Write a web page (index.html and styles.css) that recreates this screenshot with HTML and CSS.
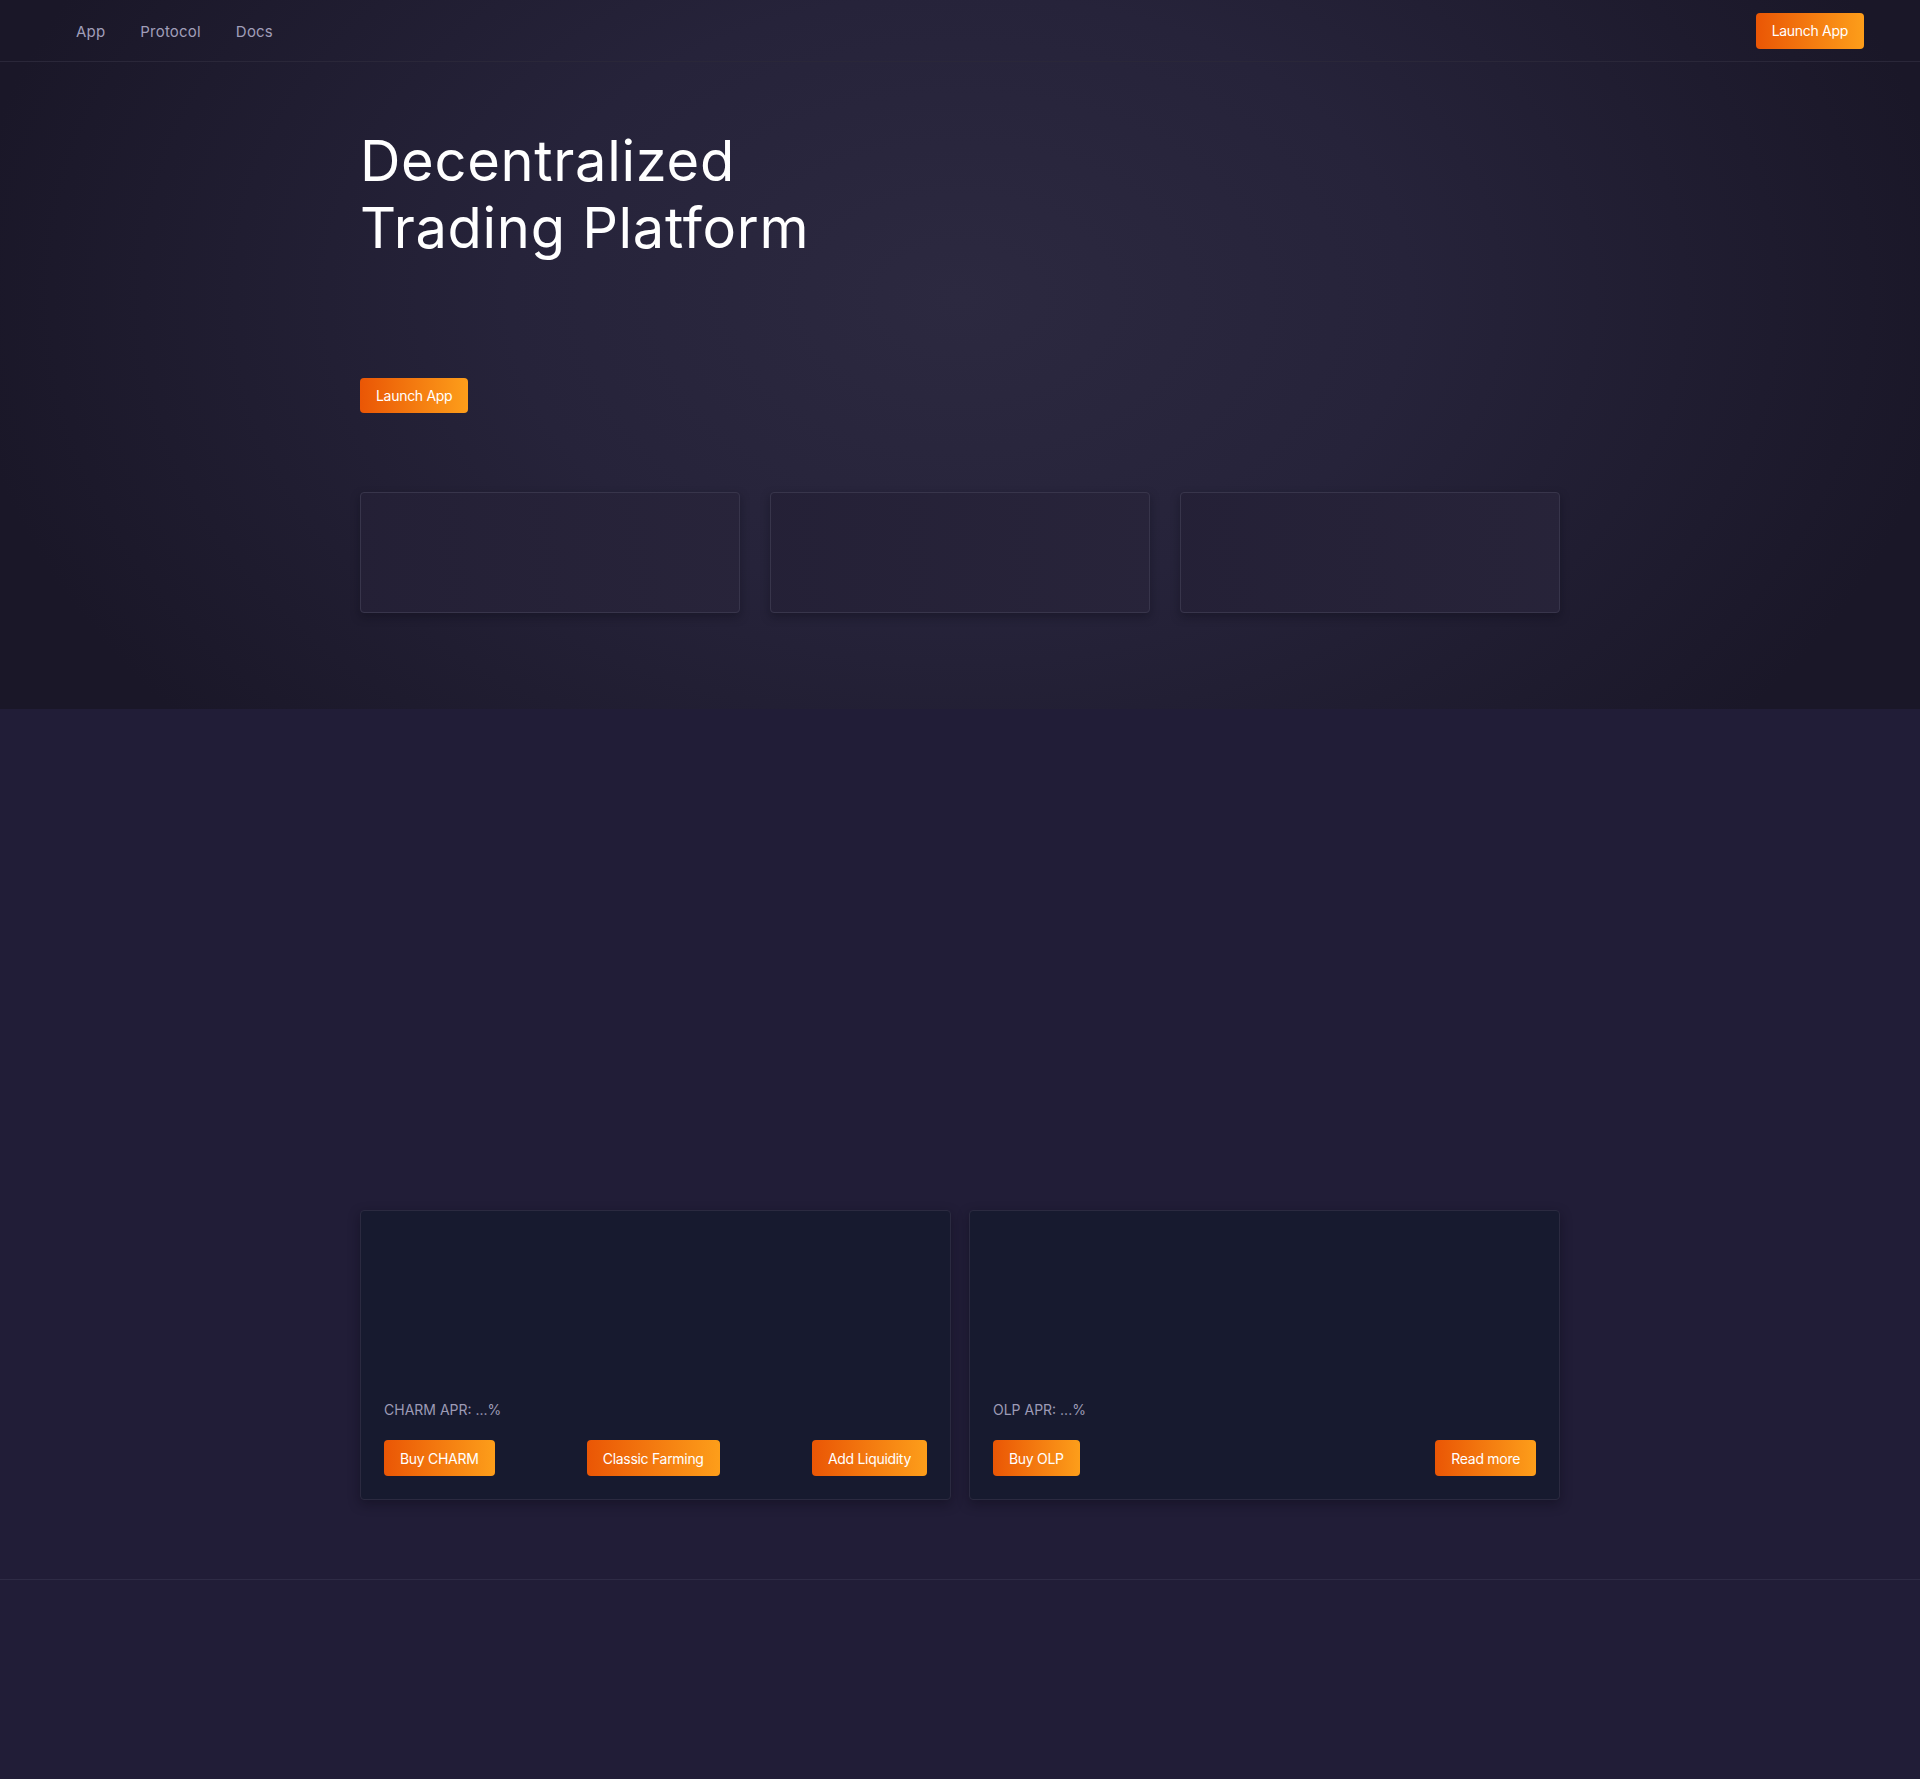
FILE: index.html
```html
<!DOCTYPE html>
<html lang="en">
<head>
<meta charset="utf-8">
<title>Decentralized Trading Platform</title>
<link rel="stylesheet" href="styles.css">
</head>
<body>
<div class="top">
  <header class="nav">
    <nav class="nav-links">
      <a href="#" class="nav-link">App</a>
      <a href="#" class="nav-link">Protocol</a>
      <a href="#" class="nav-link">Docs</a>
    </nav>
    <a href="#" class="btn">Launch App</a>
  </header>
  <section class="hero">
    <div class="container">
      <h1 class="hero-title">Decentralized<br>Trading Platform</h1>
      <div class="hero-actions">
        <a href="#" class="btn">Launch App</a>
      </div>
      <div class="stats">
        <div class="stat-card"></div>
        <div class="stat-card"></div>
        <div class="stat-card"></div>
      </div>
    </div>
  </section>
</div>
<section class="tokens">
  <div class="container token-grid">
    <div class="token-card">
      <div class="apr">CHARM APR: ...%</div>
      <div class="token-actions">
        <a href="#" class="btn">Buy CHARM</a>
        <a href="#" class="btn">Classic Farming</a>
        <a href="#" class="btn">Add Liquidity</a>
      </div>
    </div>
    <div class="token-card">
      <div class="apr">OLP APR: ...%</div>
      <div class="token-actions">
        <a href="#" class="btn">Buy OLP</a>
        <a href="#" class="btn">Read more</a>
      </div>
    </div>
  </div>
</section>
<footer class="footer"></footer>
</body>
</html>
```
FILE: styles.css
```css
* { box-sizing: border-box; }
html, body { margin: 0; padding: 0; }
body {
  background: #211d37;
  font-family: Inter, "Noto Sans", sans-serif;
  color: #fff;
}
a { text-decoration: none; }

.top {
  background: radial-gradient(ellipse 52% 95% at 50% 42%, #2c2940 0%, #26233a 45%, #1a1728 100%);
}

.nav {
  height: 62px;
  display: flex;
  align-items: center;
  justify-content: space-between;
  padding: 0 56px 0 76px;
  border-bottom: 1px solid #2a2739;
}
.nav-links { display: flex; gap: 35px; padding-top: 2px; }
.nav-link {
  color: #a09eb9;
  font-size: 15px;
  letter-spacing: 0.2px;
}

.btn {
  display: inline-flex;
  align-items: center;
  justify-content: center;
  height: 36px;
  padding: 0 16px;
  border-radius: 4px;
  background: linear-gradient(90deg, #ea5605 0%, #fd9e1a 100%);
  color: #fff;
  font-size: 14px;
  letter-spacing: -0.3px;
  white-space: nowrap;
}

.container {
  width: 1200px;
  margin: 0 auto;
}

.hero { padding: 66px 0 96px; }
.hero-title {
  margin: 0;
  font-size: 56px;
  line-height: 67px;
  font-weight: 400;
  letter-spacing: 0.7px;
  color: #fff;
}
.hero-actions { margin-top: 116px; display: flex; }
.hero-actions .btn { height: 35px; }

.stats {
  margin-top: 79px;
  display: grid;
  grid-template-columns: repeat(3, 1fr);
  gap: 30px;
}
.stat-card {
  height: 121px;
  border: 1px solid #38354b;
  border-radius: 4px;
  background: linear-gradient(100deg, rgba(36,32,54,0.9), rgba(40,36,58,0.9));
  box-shadow: 0 4px 10px rgba(10, 8, 20, 0.35);
}

.tokens {
  padding: 501px 0 79px;
}
.token-grid {
  display: grid;
  grid-template-columns: 1fr 1fr;
  gap: 18px;
}
.token-card {
  height: 290px;
  background: #171a2f;
  border: 1px solid #2b2a40;
  border-radius: 4px;
  box-shadow: 0 4px 12px rgba(10, 8, 20, 0.4);
  padding: 24px 23px 23px;
  display: flex;
  flex-direction: column;
  justify-content: flex-end;
}
.apr {
  color: #9d9bb6;
  font-size: 14px;
  line-height: 20px;
  margin-bottom: 20px;
}
.token-actions {
  display: flex;
  justify-content: space-between;
}

.footer {
  height: 200px;
  border-top: 1px solid #2e2b45;
}
```
